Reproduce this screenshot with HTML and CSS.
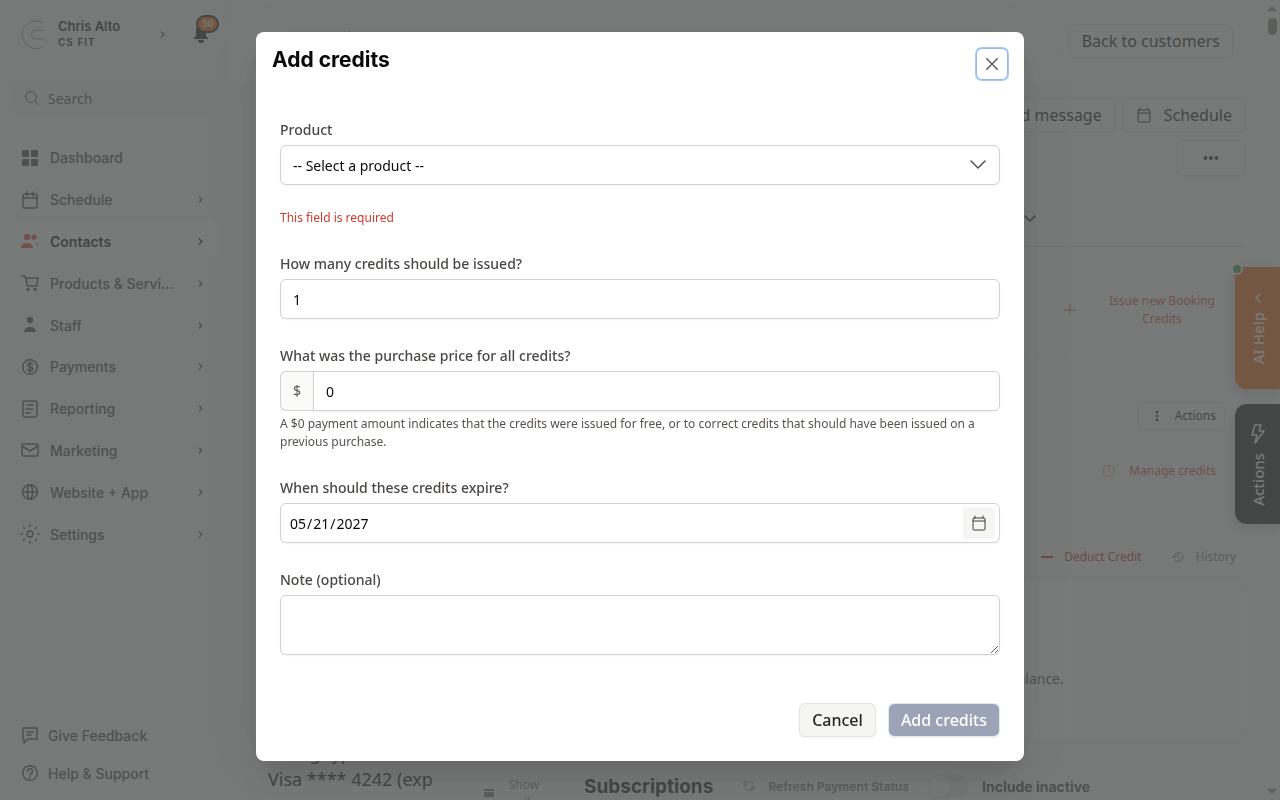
FILE: index.html
```html
<!DOCTYPE html>
<html lang="en">
<head>
    <meta charset="UTF-8">
    <title>Add credits</title>
    <link rel="stylesheet" href="styles.css">
</head>
<body>
    <div class="app">
        <aside class="sidebar">
            <div class="account-row">
                <button class="account" type="button">
                    <svg class="logo" width="30" height="30" viewBox="0 0 30 30"><path d="M23 3A14 14 0 1 0 24 28M25 11h-8a4.500 4.500 0 0 0 0 9h7l4 3" /></svg>
                    <span class="account-text">
                        <strong>Chris Alto</strong>
                        <small>CS FIT</small>
                    </span>
                    <svg class="chev" viewBox="0 0 6 8"><path d="M1 1l3 3-3 3" /></svg>
                </button>
                <button class="bell" type="button" aria-label="Notifications">
                    <svg width="16" height="18" viewBox="0 0 16 18"><path d="M8 0a5 5 0 0 0-5 5v6l-2 2v1h14v-1l-2-2V5a5 5 0 0 0-5-5zM5 15h6a3 3 0 0 1-6 0z" /></svg>
                    <span class="badge">50</span>
                </button>
            </div>

            <label class="search">
                <svg class="line" width="16" height="16" viewBox="0 0 16 16"><circle cx="7" cy="7" r="5.500" /><path d="M11 11l3.500 3.500" /></svg>
                <input type="text" placeholder="Search" aria-label="Search">
            </label>

            <nav class="menu">
                <a href="#">
                    <svg class="solid" viewBox="0 0 20 20"><rect x="2" y="2" width="7" height="7" rx="1" /><rect x="11" y="2" width="7" height="7" rx="1" /><rect x="2" y="11" width="7" height="7" rx="1" /><rect x="11" y="11" width="7" height="7" rx="1" /></svg>
                    <span>Dashboard</span>
                </a>
                <a href="#">
                    <svg viewBox="0 0 20 20"><rect x="3" y="4" width="14" height="14" rx="2" /><path d="M3 8h14M7 2v4M13 2v4" /></svg>
                    <span>Schedule</span>
                    <svg class="chev" viewBox="0 0 6 8"><path d="M1 1l3 3-3 3" /></svg>
                </a>
                <a href="#" class="active">
                    <svg class="solid" viewBox="0 0 20 20"><circle cx="7" cy="6" r="3.200" /><circle cx="14" cy="6" r="2.600" /><path d="M1 17c0-3 2.500-5 6-5s6 2 6 5zM14 11c3 .500 4.500 2 5 4l-2-1c-.700-1.500-1.500-2.200-3-3z" /></svg>
                    <span>Contacts</span>
                    <svg class="chev" viewBox="0 0 6 8"><path d="M1 1l3 3-3 3" /></svg>
                </a>
                <a href="#">
                    <svg viewBox="0 0 20 20"><path d="M2 3h3l2.500 10h9L18 5H5.500" /><circle cx="8" cy="16.500" r="1" /><circle cx="15" cy="16.500" r="1" /></svg>
                    <span>Products &amp; Servi...</span>
                    <svg class="chev" viewBox="0 0 6 8"><path d="M1 1l3 3-3 3" /></svg>
                </a>
                <a href="#">
                    <svg class="solid" viewBox="0 0 20 20"><circle cx="10" cy="5" r="3.200" /><path d="M4 17c0-3 2.500-5 6-5s6 2 6 5z" /></svg>
                    <span>Staff</span>
                    <svg class="chev" viewBox="0 0 6 8"><path d="M1 1l3 3-3 3" /></svg>
                </a>
                <a href="#">
                    <svg viewBox="0 0 20 20"><circle cx="10" cy="10" r="7.300" /><path d="M12.500 7.500C12 6.500 11 6.200 10 6.200c-1.500 0-2.600.700-2.600 1.900 0 2.600 5.200 1.200 5.200 3.800 0 1.200-1.200 1.900-2.600 1.900-1.300 0-2.300-.500-2.700-1.600M10 4.500v11" /></svg>
                    <span>Payments</span>
                    <svg class="chev" viewBox="0 0 6 8"><path d="M1 1l3 3-3 3" /></svg>
                </a>
                <a href="#">
                    <svg viewBox="0 0 20 20"><rect x="3" y="2" width="14" height="16" rx="2" /><path d="M7 6h6M6 10h7M6 14h4" /></svg>
                    <span>Reporting</span>
                    <svg class="chev" viewBox="0 0 6 8"><path d="M1 1l3 3-3 3" /></svg>
                </a>
                <a href="#">
                    <svg viewBox="0 0 20 20"><rect x="2" y="4" width="16" height="12" rx="2" /><path d="M2 6l8 5 8-5" /></svg>
                    <span>Marketing</span>
                    <svg class="chev" viewBox="0 0 6 8"><path d="M1 1l3 3-3 3" /></svg>
                </a>
                <a href="#">
                    <svg viewBox="0 0 20 20"><circle cx="10" cy="10" r="7.300" /><ellipse cx="10" cy="10" rx="2.500" ry="7.300" /><path d="M3 10h14" /></svg>
                    <span>Website + App</span>
                    <svg class="chev" viewBox="0 0 6 8"><path d="M1 1l3 3-3 3" /></svg>
                </a>
                <a href="#">
                    <svg viewBox="0 0 20 20"><circle cx="10" cy="10" r="3" /><path d="M10 1v1.500M10 17.500V19M1 10h1.500M17.500 10H19M3.500 3.500l1 1M15.500 15.500l1 1M3.500 16.500l1-1M15.500 4.500l1-1" /></svg>
                    <span>Settings</span>
                    <svg class="chev" viewBox="0 0 6 8"><path d="M1 1l3 3-3 3" /></svg>
                </a>
            </nav>

            <div class="support">
                <a href="#">
                    <svg width="20" height="20" viewBox="0 0 20 20"><path d="M3 3h14v11H8l-4 4v-4H3zM7 7h6M7 10h4" /></svg>
                    Give Feedback
                </a>
                <a href="#">
                    <svg width="20" height="20" viewBox="0 0 20 20"><circle cx="10" cy="10" r="7.300" /><path d="M7.500 8.300a2.500 2.500 0 1 1 3.500 2.200c-.700.300-1 .700-1 1.500M10 14v1" /></svg>
                    Help &amp; Support
                </a>
            </div>
        </aside>

        <main class="main">
            <header class="page-header">
                <h1>Alenakin J.</h1>
                <button class="btn" type="button">Back to customers</button>
            </header>

            <div class="content">
                <div class="toolbar">
                    <button class="btn" type="button">Send message</button>
                    <button class="btn" type="button">
                        <svg class="line" width="16" height="16" viewBox="0 0 16 16"><rect x="2" y="3" width="12" height="12" rx="1" /><path d="M2 6h12M4 1v2M12 1v2" /></svg>
                        Schedule
                    </button>
                    <button class="btn more" type="button" aria-label="More">
                        <svg class="solid" width="16" height="16" viewBox="0 0 16 16"><circle cx="2.500" cy="8" r="1.900" /><circle cx="8" cy="8" r="1.900" /><circle cx="13.500" cy="8" r="1.900" /></svg>
                    </button>
                </div>
                <div class="filter">
                    <svg class="line" width="12" height="8" viewBox="0 0 12 8"><path d="M1 1l5 5 5-5" /></svg>
                </div>

                <div class="credit-row issue">
                    <a class="red" href="#">
                        <svg class="thin" width="12" height="12" viewBox="0 0 12 12"><path d="M6 0v12M0 6h12" /></svg>
                        <span>Issue new Booking Credits</span>
                    </a>
                </div>
                <div class="credit-row actions">
                    <button class="btn small" type="button">
                        <svg class="solid" width="12" height="12" viewBox="0 0 12 12"><circle cx="6" cy="2" r="1.200" /><circle cx="6" cy="6" r="1.200" /><circle cx="6" cy="10" r="1.200" /></svg>
                        Actions
                    </button>
                    <a class="red" href="#">
                        <svg class="faint" width="12" height="12" viewBox="0 0 12 12"><circle cx="6" cy="6" r="5.500" /><path d="M6 2v4l2 2" /></svg>
                        Manage credits
                    </a>
                </div>
                <div class="balance-links">
                    <a class="red strong" href="#">
                        <svg width="12" height="12" viewBox="0 0 12 12"><path d="M1 6h10" /></svg>
                        Deduct Credit
                    </a>
                    <a class="muted" href="#">
                        <svg class="thin" width="12" height="12" viewBox="0 0 12 12"><path d="M2 6a4.500 4.500 0 1 1 1.500 3.300M0 5l2 2 2-2M6 3v3l2 1" /></svg>
                        History
                    </a>
                </div>
                <div class="balance-card">There are no transactions yet for this balance.</div>

                <div class="bottom">
                    <div class="cards">
                        <p>Billing type<br>Visa **** 4242 (exp</p>
                        <a class="muted" href="#">
                            <svg class="solid" width="10" height="8" viewBox="0 0 10 8"><path d="M0 0h10v2H0zM0 3h10v5H0z" /></svg>
                            <span>Show all</span>
                        </a>
                    </div>
                    <div class="subs">
                        <h2>Subscriptions</h2>
                        <button class="refresh" type="button">
                            <svg width="12" height="12" viewBox="0 0 12 12"><path d="M1 5V2M1 5h3M1 5a5 5 0 0 1 9-1M11 7v3M11 7H8M11 7a5 5 0 0 1-9 1" /></svg>
                            Refresh Payment Status
                        </button>
                        <label class="toggle"><input type="checkbox"> Include inactive</label>
                    </div>
                </div>
            </div>
        </main>

        <div class="scroll-track">
            <span class="arrow up"></span>
            <span class="thumb"></span>
            <span class="arrow down"></span>
        </div>
    </div>

    <div class="side-tabs">
        <button class="side-tab help" type="button">
            <span>AI Help</span>
            <svg width="12" height="12" viewBox="0 0 12 12"><path d="M8 2L4 6l4 4" /></svg>
            <i class="dot"></i>
        </button>
        <button class="side-tab dark" type="button">
            <span>Actions</span>
            <svg width="16" height="22" viewBox="0 0 16 22"><path d="M5 2h6L9 8h5L5 20l2-8H2z" /></svg>
        </button>
    </div>

    <div class="overlay">
        <form class="modal" role="dialog" aria-labelledby="modal-title">
            <div class="modal-header">
                <h2 id="modal-title">Add credits</h2>
                <button class="close" type="button" aria-label="Close">
                    <svg width="14" height="14" viewBox="0 0 16 16"><path d="M2 2l12 12M14 2L2 14" /></svg>
                </button>
            </div>
            <div class="modal-body">
                <div class="field">
                    <label for="product">Product</label>
                    <div class="select">
                        <select id="product">
                            <option>-- Select a product --</option>
                        </select>
                        <svg width="16" height="10" viewBox="0 0 16 10"><path d="M1 1l7 7 7-7" /></svg>
                    </div>
                    <p class="error">This field is required</p>
                </div>
                <div class="field">
                    <label for="count">How many credits should be issued?</label>
                    <input id="count" type="text" value="1">
                </div>
                <div class="field">
                    <label for="price">What was the purchase price for all credits?</label>
                    <div class="money">
                        <span>$</span>
                        <input id="price" type="text" value="0">
                    </div>
                    <p class="hint">A $0 payment amount indicates that the credits were issued for free, or to correct credits that should have been issued on a previous purchase.</p>
                </div>
                <div class="field">
                    <label for="expires">When should these credits expire?</label>
                    <div class="date">
                        <input id="expires" type="date" value="2027-05-21">
                        <button type="button" aria-label="Open calendar">
                            <svg width="16" height="16" viewBox="0 0 16 16"><rect x="2" y="3" width="12" height="12" rx="1" /><path d="M2 6h12M4 1v2M12 1v2" /></svg>
                        </button>
                    </div>
                </div>
                <div class="field">
                    <label for="note">Note (optional)</label>
                    <textarea id="note"></textarea>
                </div>
            </div>
            <div class="modal-footer">
                <button class="btn cancel" type="button">Cancel</button>
                <button class="btn primary" type="submit" disabled>Add credits</button>
            </div>
        </form>
    </div>
</body>
</html>
```
FILE: styles.css
```css
* {
    box-sizing: border-box;
}

body, h1, h2, p {
    margin: 0;
}

body {
    height: 100vh;
    overflow: hidden;
    font-family: "Noto Sans", sans-serif;
    font-size: 14px;
    color: #292524;
}

button, input, select, textarea {
    font: inherit;
    color: inherit;
}

button {
    cursor: pointer;
}

a {
    color: inherit;
    text-decoration: none;
}

svg {
    flex: none;
    fill: none;
    stroke: currentColor;
    stroke-width: 1.5;
    stroke-linecap: round;
    stroke-linejoin: round;
}

svg.line {
    stroke-width: 1;
}

svg.solid {
    fill: currentColor;
    stroke: none;
}

svg.thin {
    stroke-width: 1;
}

svg.faint {
    stroke-width: 1;
    opacity: 0.6;
}

.app {
    display: flex;
    height: 100vh;
    background: #f9f9f8;
}

/* Sidebar */
.sidebar {
    flex: none;
    display: flex;
    flex-direction: column;
    width: 228px;
    padding: 8px;
    color: #57504f;
    font-family: Inter, sans-serif;
    font-weight: 500;
}

.account-row {
    display: flex;
    align-items: center;
    gap: 13px;
}

.account {
    display: flex;
    align-items: center;
    width: 172px;
    height: 52px;
    padding: 0 14px 0 11px;
    border: 0;
    border-radius: 8px;
    background: #fbfbfb;
    text-align: left;
}

.logo {
    stroke: #5fb5ae;
    stroke-width: 1;
}

.account-text {
    flex: 1;
    display: flex;
    flex-direction: column;
    padding-left: 9px;
    line-height: 16px;
    color: #292524;
}

.account-text strong {
    font-size: 13px;
    font-weight: 600;
}

.account-text small {
    font-size: 10px;
    font-weight: 600;
    letter-spacing: 1px;
}

.chev {
    width: 6px;
    height: 7px;
}

.bell {
    position: relative;
    padding: 0;
    border: 0;
    background: none;
    line-height: 0;
}

.bell svg {
    fill: #292524;
    stroke: none;
}

.badge {
    position: absolute;
    left: 3px;
    top: -10px;
    padding: 0 4px;
    border: 2px solid #292524;
    border-radius: 9px;
    background: #ee6f1c;
    color: #fff;
    font-size: 9px;
    line-height: 14px;
}

.search {
    display: flex;
    align-items: center;
    gap: 8px;
    height: 36px;
    margin: 20px 5px 0 4px;
    padding: 0 12px;
    border-radius: 8px;
    background: #f5f5f4;
}

.search input {
    width: 100%;
    padding: 0;
    border: 0;
    outline: 0;
    background: none;
    font-family: "Noto Sans", sans-serif;
    font-weight: 400;
}

.search input::placeholder {
    color: #57504f;
}

.menu {
    display: flex;
    flex-direction: column;
    height: 418px;
    margin-top: 21px;
}

.menu a {
    flex: 1;
    display: flex;
    align-items: center;
    gap: 10px;
    padding: 0 16px 0 12px;
    border-radius: 8px;
}

.menu a > svg:first-child {
    width: 20px;
    height: 20px;
}

.menu span {
    flex: 1;
}

.menu .active {
    background: #fdfdfd;
    color: #1c1917;
    font-weight: 600;
}

.menu .active > svg:first-child {
    color: #e0533a;
}

.support {
    display: flex;
    flex-direction: column;
    gap: 18px;
    margin: auto 0 8px;
    padding: 0 0 1px 12px;
}

.support a {
    display: flex;
    align-items: center;
    gap: 8px;
}

/* Customer page */
.main {
    flex: 1;
    min-width: 0;
    display: flex;
    flex-direction: column;
    overflow: hidden;
}

.page-header {
    flex: none;
    display: flex;
    align-items: center;
    justify-content: space-between;
    height: 82px;
    padding: 0 31px 0 36px;
    background: #fcfcfc;
}

h1, h2 {
    font-family: Inter, sans-serif;
    font-weight: 700;
}

h1 {
    font-size: 24px;
}

.btn {
    display: inline-flex;
    align-items: center;
    justify-content: center;
    gap: 12px;
    height: 34px;
    padding: 0 12px;
    border: 1px solid #e7e5e4;
    border-radius: 6px;
    background: #fafaf9;
    font-size: 16px;
    box-shadow: 0 1px 2px rgba(0, 0, 0, 0.05);
}

.more {
    width: 68px;
    height: 36px;
}

.content {
    padding: 16px 19px 0 40px;
}

.toolbar {
    display: flex;
    flex-wrap: wrap;
    justify-content: flex-end;
    gap: 8px;
    padding-left: 660px;
}

.filter {
    display: flex;
    justify-content: flex-end;
    align-items: center;
    height: 55px;
    margin-top: 16px;
    padding-right: 209px;
    border-bottom: 1px solid #e2e1e0;
}

.filter .line {
    stroke-width: 1.5;
}

.credit-row {
    display: flex;
    flex-direction: column;
    align-items: flex-end;
    margin-left: 304px;
    font-size: 12px;
    line-height: 18px;
}

.red {
    display: inline-flex;
    align-items: center;
    gap: 14px;
    color: #d8533f;
}

.issue {
    padding: 45px 29px 24px 0;
    border-bottom: 1px solid #f3f2f1;
}

.issue .red {
    gap: 32px;
    text-align: center;
}

.issue span {
    width: 108px;
}

.actions {
    gap: 32px;
    padding: 49px 20px 0 0;
}

.actions .red {
    margin-right: 9px;
}

.small {
    height: 28px;
    padding: 0 8px 0 12px;
    font-size: 12px;
}

.balance-links {
    display: flex;
    justify-content: flex-end;
    gap: 30px;
    padding: 68px 9px 14px 0;
    font-size: 12px;
    line-height: 18px;
}

.balance-links .red {
    gap: 11px;
}

.red.strong {
    color: #d22f24;
}

.strong svg {
    stroke-width: 2;
}

.muted {
    display: inline-flex;
    align-items: center;
    gap: 12px;
    color: #8a8682;
}

.balance-card {
    display: flex;
    align-items: center;
    justify-content: center;
    height: 160px;
    margin-left: 304px;
    padding: 36px 0 0 10px;
    border-radius: 12px;
    background: #fdfdfd;
    color: #57534e;
}

.bottom {
    display: flex;
    gap: 44px;
}

.cards {
    display: flex;
    justify-content: space-between;
    width: 272px;
    font-size: 18px;
    line-height: 26px;
}

.cards a {
    align-items: flex-start;
    width: 56px;
    padding-top: 36px;
    gap: 14px;
    font-size: 12px;
    line-height: 18px;
    text-align: center;
}

.cards svg {
    margin-top: 13px;
}

.subs {
    flex: 1;
    display: flex;
    align-items: center;
    height: 68px;
    padding-top: 24px;
    font-family: Inter, sans-serif;
}

.subs h2 {
    font-size: 19px;
}

.refresh {
    display: flex;
    align-items: center;
    gap: 13px;
    margin: 0 18px 0 30px;
    padding: 0;
    border: 0;
    background: none;
    color: #8a8682;
    font-size: 12px;
    font-weight: 700;
}

.refresh svg {
    stroke-width: 1;
}

.toggle {
    display: flex;
    align-items: center;
    gap: 13px;
    color: #57534e;
    font-weight: 700;
}

.toggle input {
    appearance: none;
    width: 42px;
    height: 24px;
    margin: 0;
    border-radius: 12px;
    background: radial-gradient(circle at 12px 12px, #fafaf9 10px, transparent 11px) #e7e5e4;
}

.scroll-track {
    display: flex;
    flex-direction: column;
    align-items: center;
    width: 16px;
    padding: 6px 0;
    background: #f9f9f8;
}

.arrow {
    border: 5px solid transparent;
}

.up {
    border-top: 0;
    border-bottom-color: #8a8682;
}

.down {
    margin-top: auto;
    border-bottom: 0;
    border-top-color: #8a8682;
}

.thumb {
    width: 9px;
    height: 17px;
    margin-top: 7px;
    border-radius: 5px;
    background: #8a8682;
}

.side-tabs {
    position: absolute;
    right: 0;
    top: 267px;
    display: flex;
    flex-direction: column;
    gap: 15px;
}

.side-tab {
    position: relative;
    display: flex;
    flex-direction: column-reverse;
    align-items: center;
    justify-content: center;
    gap: 8px;
    width: 45px;
    height: 122px;
    padding: 0;
    border: 0;
    border-radius: 12px 0 0 12px;
    background: #ee6f1c;
    color: #fff;
    font-size: 15px;
    font-weight: 500;
    box-shadow: 0 4px 12px rgba(0, 0, 0, 0.2);
}

.help {
    border-top-left-radius: 0;
}

.dark {
    height: 120px;
    background: #202628;
}

.side-tab span {
    writing-mode: vertical-rl;
    transform: rotate(180deg);
}

.dot {
    position: absolute;
    left: -4px;
    top: -4px;
    width: 12px;
    height: 12px;
    border: 2px solid #fff;
    border-radius: 50%;
    background: #3fa35a;
}

/* Modal */
.overlay {
    position: fixed;
    inset: 0;
    padding: 32px;
    background: rgba(78, 80, 79, 0.76);
}

.modal {
    max-width: 768px;
    margin: 0 auto;
    border-radius: 8px;
    background: #fff;
    box-shadow: 0 20px 25px -5px rgba(0, 0, 0, 0.1), 0 8px 60px rgba(0, 0, 0, 0.06);
}

.modal-header {
    display: flex;
    justify-content: space-between;
    padding: 16px;
}

.modal-header h2 {
    color: #0c0a09;
    font-size: 21px;
    line-height: 24px;
}

.close {
    display: flex;
    align-items: center;
    justify-content: center;
    width: 32px;
    height: 32px;
    padding: 0;
    border: 1px solid #94b9f2;
    border-radius: 6px;
    background: #fff;
    color: #6b6865;
    box-shadow: 0 0 0 1px #a9c8f7;
}

.close svg {
    stroke-width: 2;
}

.modal-body {
    display: flex;
    flex-direction: column;
    gap: 27px;
    padding: 24px;
}

.field {
    display: flex;
    flex-direction: column;
}

.field label {
    margin-bottom: 5px;
    color: #4a4744;
    font-weight: 500;
    line-height: 20px;
}

.field input, .field select, .field textarea {
    width: 100%;
    height: 40px;
    padding: 0 12px;
    border: 1px solid #d1d1d6;
    border-radius: 6px;
    background: #fff;
    color: #0c0a09;
    box-shadow: 0 1px 2px rgba(0, 0, 0, 0.05);
}

.field textarea {
    display: block;
    height: 60px;
    padding: 8px 12px;
}

.select {
    display: grid;
    align-items: center;
}

.select > * {
    grid-area: 1 / 1;
}

.select select {
    appearance: none;
}

.select svg {
    justify-self: end;
    margin-right: 14px;
    color: #57534e;
    pointer-events: none;
}

.error {
    margin-top: 24px;
    color: #cf3a2b;
    font-size: 12px;
    line-height: 18px;
}

.money {
    display: flex;
}

.money span {
    width: 33px;
    border: 1px solid #d1d1d6;
    border-right: 0;
    border-radius: 6px 0 0 6px;
    background: #fafaf9;
    color: #57534e;
    line-height: 38px;
    text-align: center;
}

.money input {
    flex: 1;
    border-radius: 0 6px 6px 0;
}

.hint {
    margin-top: 4px;
    color: #57534e;
    font-size: 12px;
    line-height: 18px;
}

.date {
    display: grid;
    align-items: center;
}

.date > * {
    grid-area: 1 / 1;
}

.date input {
    padding: 0 8px;
}

.date input::-webkit-calendar-picker-indicator {
    display: none;
}

.date button {
    justify-self: end;
    display: flex;
    align-items: center;
    justify-content: center;
    width: 32px;
    height: 32px;
    margin-right: 5px;
    padding: 0;
    border: 0;
    border-radius: 4px;
    background: #f5f5f4;
    color: #44403c;
}

.date svg {
    stroke-width: 1;
}

.modal-footer {
    display: flex;
    justify-content: flex-end;
    gap: 12px;
    padding: 24px;
}

.modal-footer .btn {
    font-weight: 500;
}

.cancel {
    background: #f5f5f4;
}

.primary {
    border-color: #e4e7ee;
    background: #9ba3b7;
    background-clip: padding-box;
    color: #fff;
}
```
